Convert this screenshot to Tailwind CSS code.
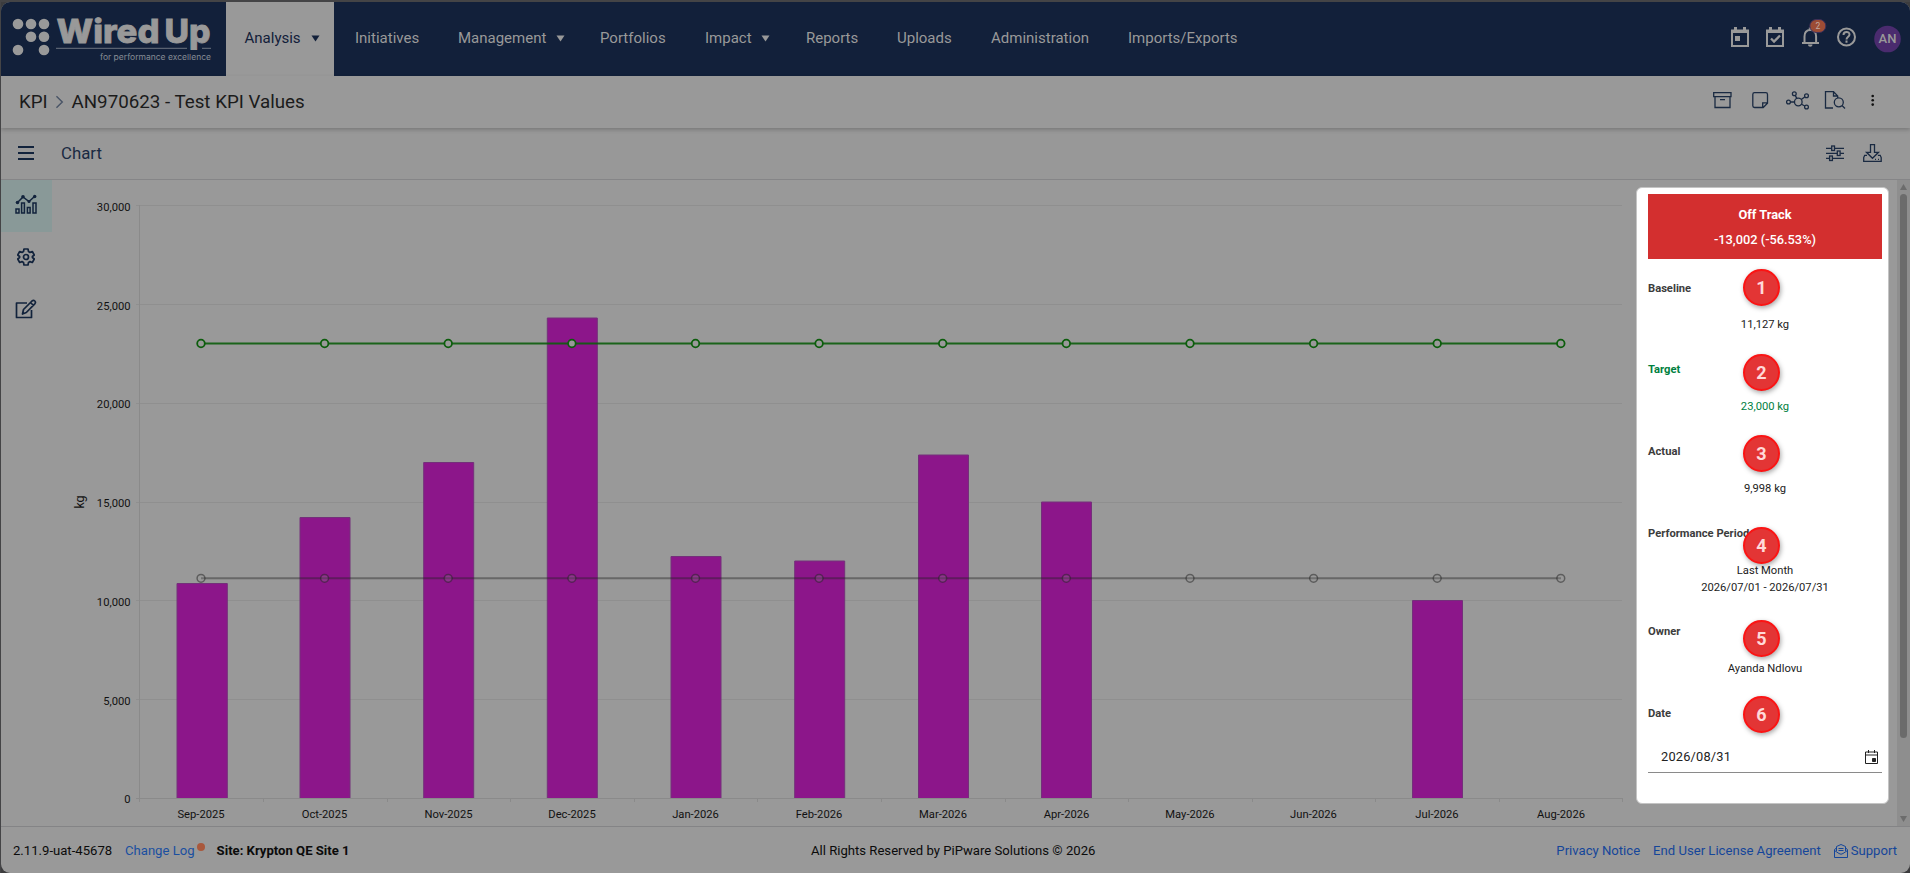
<!DOCTYPE html>
<html lang="en">
<head>
<meta charset="utf-8">
<title>WiredUp - Test KPI Values</title>
<script src="https://cdn.jsdelivr.net/npm/@tailwindcss/browser@4"></script>
</head>
<body class="h-screen w-screen overflow-hidden bg-[#3c3c3e] font-['Roboto',sans-serif]">
<div class="h-[873px] w-[1910px] border-t-2 border-l-[1px] border-[#444446]">
<div class="relative flex h-[871px] w-[1909px] flex-col overflow-hidden rounded-[9px] bg-[#999] text-[#111]">

  <header class="flex h-[74px] shrink-0 bg-[#12203a] text-[15px] text-[#999]">
    <div class="w-[225px] shrink-0">
      <svg width="225" height="74" viewBox="1 2 225 74" fill="#999">
        <circle cx="18" cy="24" r="5.3"/><circle cx="31" cy="24" r="5.3"/><circle cx="44" cy="24" r="5.3"/>
        <circle cx="31" cy="36.7" r="5.3"/><circle cx="44" cy="36.7" r="5.3"/>
        <circle cx="18" cy="50" r="5.3"/><circle cx="44" cy="50" r="5.3"/>
        <text x="56.500" y="42.800" font-family="Inter,sans-serif" font-weight="800" font-size="33" textLength="103" lengthAdjust="spacingAndGlyphs" stroke="#999" stroke-width=".8">Wired</text>
        <text x="164.500" y="42.800" font-family="Inter,sans-serif" font-weight="800" font-size="33" textLength="46" lengthAdjust="spacingAndGlyphs" stroke="#999" stroke-width=".8">Up</text>
        <path d="M56 48.3H187M202 48.3h9" stroke="#6c7480" stroke-width="1"/>
        <text x="100" y="60" font-family="Inter,sans-serif" font-size="8" textLength="111" lengthAdjust="spacingAndGlyphs" fill="#868c95">for performance excellence</text>
      </svg>
    </div>
    <nav class="flex h-full">
      <div class="flex w-[108px] items-center bg-[#999] pb-[2px] pl-[18.500px] text-[#12203a]">Analysis<svg class="mt-[1px] ml-[10px]" width="9" height="7" viewBox="0 0 9 7"><path d="M.5.5h8l-4 6z" fill="currentColor"/></svg></div>
      <div class="flex w-[124px] items-center pb-[2px] pl-[21px]">Initiatives</div>
      <div class="flex w-[142px] items-center pb-[2px]">Management<svg class="mt-[1px] ml-[10px]" width="9" height="7" viewBox="0 0 9 7"><path d="M.5.5h8l-4 6z" fill="currentColor"/></svg></div>
      <div class="flex w-[105px] items-center pb-[2px]">Portfolios</div>
      <div class="flex w-[101px] items-center pb-[2px]">Impact<svg class="mt-[1px] ml-[9px]" width="9" height="7" viewBox="0 0 9 7"><path d="M.5.5h8l-4 6z" fill="currentColor"/></svg></div>
      <div class="flex w-[91px] items-center pb-[2px]">Reports</div>
      <div class="flex w-[94px] items-center pb-[2px]">Uploads</div>
      <div class="flex w-[137px] items-center pb-[2px]">Administration</div>
      <div class="flex items-center pb-[2px]">Imports/Exports</div>
    </nav>
    <div class="ml-auto">
      <svg width="190" height="74" viewBox="1720 2 190 74" fill="none" stroke="#999" stroke-width="2">
        <path d="M1732 30.5h16V46h-16z"/><path d="M1731 31.5h18M1735.5 27v4M1744.500 27v4" stroke-width="3"/><path d="M1735 36h5v5h-5z" fill="#999" stroke="none"/>
        <path d="M1767 30.500h16V46h-16z"/><path d="M1766 31.500h18M1770.500 27v4M1779.500 27v4" stroke-width="3"/><path d="M1771 38.500l3 3 6-6" stroke-width="2.300"/>
        <path d="M1802 43h17M1804.500 43v-6.500c0-4 2-6.500 5.800-6.500s5.800 2.500 5.800 6.500V43"/><path d="M1808 44.500h4.500c0 3-4.500 3-4.500 0zM1808.800 27.500h3v3h-3z" fill="#999" stroke="none"/>
        <rect x="1809.800" y="19.500" width="16" height="13" rx="6.500" fill="#9c4c35" stroke="#3c2f59" stroke-width="1"/>
        <text x="1818" y="29" text-anchor="middle" font-family="Roboto,sans-serif" font-size="8.500" fill="#c3aaa2" stroke="none">2</text>
        <circle cx="1846.500" cy="37" r="8.500"/>
        <path d="M1843.500 35c0-4 6-4 6-.5 0 2.200-3 2.200-3 5"/><path d="M1846.500 40.500v2.200"/>
        <circle cx="1887.500" cy="39" r="13.300" fill="#4a2b6e" stroke="none"/>
        <text x="1887.500" y="43.300" text-anchor="middle" font-family="Roboto,sans-serif" font-size="13" font-weight="500" fill="#999" stroke="none">AN</text>
      </svg>
    </div>
  </header>

  <div class="z-10 flex h-[52px] shrink-0 items-center pl-[18px] shadow-[0_2px_4px_rgba(0,0,0,0.2)]">
    <h1 class="flex items-center text-[18.750px] leading-none text-[#1b1b1b]"><span class="w-[36px]">KPI</span><svg width="16.500" height="16" viewBox="0 0 17 16" fill="none" stroke="#4a5567" stroke-width="1.500"><path d="M1.500 2l6 6-6 6"/></svg><span>AN970623 - Test KPI Values</span></h1>
    <div class="ml-auto">
      <svg width="200" height="52" viewBox="1710 76 200 52" fill="none" stroke="#1a2a42" stroke-width="1.300">
        <path d="M1713.700 92.700h17.300v4h-17.300zM1715 96.700v10.800h15V96.700M1720 99.700h5"/>
        <path d="M1754.500 92.700h11.300q1.700 0 1.700 1.700v8.800l-4.300 4.300h-8.700q-1.700 0-1.700-1.700V94.400q0-1.700 1.700-1.700zM1762.700 107.300v-4.500h4.500"/>
        <circle cx="1798.300" cy="102" r="3.800"/><circle cx="1788.500" cy="102" r="1.900"/><circle cx="1794.300" cy="93.700" r="1.900"/><circle cx="1806.500" cy="95.700" r="1.900"/><circle cx="1806.500" cy="107" r="1.900"/><path d="M1790.500 102h4M1795.200 95.400l1.600 3M1801.300 99.600l3.400-2.700M1801.500 104.200l3.400 1.800"/>
        <path d="M1833 108h-7.500V91.700h8l4.200 4.200v2M1833.500 91.700v4.300h4.200"/><circle cx="1838.800" cy="102.300" r="4.500"/><path d="M1842 105.500l3 3"/>
        <g fill="#111" stroke="none"><circle cx="1872.700" cy="96" r="1.300"/><circle cx="1872.700" cy="100.300" r="1.300"/><circle cx="1872.700" cy="104.600" r="1.300"/></g>
      </svg>
    </div>
  </div>

  <div class="flex h-[52px] shrink-0 items-center border-b border-[#858587] bg-[#989898]">
    <div class="w-[60px] shrink-0 pl-[17px] pb-[1px]"><svg width="16" height="14" viewBox="0 0 16 14" stroke="#12233c" stroke-width="2"><path d="M0 1h16M0 7h16M0 13h16"/></svg></div>
    <h2 class="text-[16.800px] leading-none text-[#1a2a42]">Chart</h2>
    <div class="ml-auto">
      <svg width="100" height="50" viewBox="1810 128 100 50" fill="none" stroke="#1a2a42" stroke-width="1.300">
        <path d="M1826 147.300h5.500M1834.500 147.300h9.500M1826 152.300h11.200M1840.200 152.300h3.800M1826 157.300h3.500M1832.500 157.300h11.500"/><rect x="1831.700" y="145" width="2.800" height="4.500"/><rect x="1837.300" y="150" width="2.800" height="4.500"/><rect x="1829.600" y="155" width="2.800" height="4.500"/>
        <path d="M1870.500 143.700h4v7.600h4l-6 6-6-6h4zM1867 154.300h-2.300l-1 2.300v3.700h17.500v-3.700l-1-2.300h-2.300"/><path d="M1875 158.300h1M1878 158.300h1"/>
      </svg>
    </div>
  </div>

  <main class="flex h-[647px] shrink-0 border-b border-[#848486]">
    <aside class="w-[51px] shrink-0">
      <div class="flex h-[52px] items-center justify-center bg-[#899998] pr-[1px] pb-[3px]">
        <svg width="24" height="24" viewBox="14 193 24 24" fill="none" stroke="#12233c" stroke-width="1.500"><path d="M16 209h3v4h-3zM21.600 203h2.800v10h-2.800zM27.400 207.500h2.700v5.500h-2.700zM33 203h3v10h-3zM17.500 202.500l5.500-5.500 6 4.500 5.500-5"/><g fill="#12233c" stroke="none"><circle cx="17.500" cy="202.500" r="1.800"/><circle cx="23" cy="196.800" r="1.800"/><circle cx="29" cy="201.500" r="1.500"/><circle cx="34.700" cy="196.500" r="1.700"/></g></svg>
      </div>
      <div class="flex h-[52px] items-center justify-center pr-[1px] pb-[3px]">
        <svg width="18" height="18" viewBox="0 0 18 18" fill="none" stroke="#12233c" stroke-width="1.700" stroke-linejoin="round"><path d="M7 1h4l.5 2.500 1.500.9 2.300-.9 2 3.500-1.900 1.500v1l1.900 1.500-2 3.500-2.300-.9-1.500.9L11 17H7l-.5-2.500-1.500-.9-2.300.9-2-3.500 1.900-1.500v-1L.7 7l2-3.500 2.300.9 1.500-.9z"/><circle cx="9" cy="9" r="2.500"/></svg>
      </div>
      <div class="flex h-[52px] items-center justify-center pr-[1px] pb-[3px]">
        <svg width="22" height="20" viewBox="15 298 22 20" fill="none" stroke="#12233c" stroke-width="1.700" stroke-linejoin="round"><path d="M27 302H16.500v14.500h15V309M22.500 313l1-4.500 8.500-8.500q1.500-1.200 2.800 0t0 2.800l-8.500 8.700zM30.500 301.500l3 3"/></svg>
      </div>
    </aside>

    <section class="w-[1584px] shrink-0">
      <svg width="1584" height="645" viewBox="52 180 1584 645" font-family="Roboto,sans-serif" font-size="11.200" fill="#111">
        <path stroke="#8f8f8f" stroke-width="1" d="M136 205.500H1622M136 304.500H1622M136 403.500H1622M136 502.500H1622M136 600.500H1622M136 699.500H1622"/>
        <path stroke="#8a8a8a" stroke-width="1" fill="none" d="M136 798.500H1622.500M139.500 205V802M263.500 798v4M387.500 798v4M510.500 798v4M634.500 798v4M757.500 798v4M881.500 798v4M1005.500 798v4M1128.500 798v4M1252.500 798v4M1375.500 798v4M1499.500 798v4M1622.500 798v4"/>
        <g text-anchor="end"><text x="130.500" y="210.500">30,000</text><text x="130.500" y="309.500">25,000</text><text x="130.500" y="407.500">20,000</text><text x="130.500" y="506.500">15,000</text><text x="130.500" y="605.500">10,000</text><text x="130.500" y="704.500">5,000</text><text x="130.500" y="802.500">0</text></g>
        <text transform="translate(84 502) rotate(-90)" text-anchor="middle" font-size="12.500">kg</text>
        <g fill="#8c168a" stroke="#74307a" stroke-width="1">
          <path d="M177 798V583.500h50.300V798"/><path d="M300 798V517.500h50V798"/><path d="M423.700 798V462.500h50V798"/><path d="M547.300 798V318h50v480"/><path d="M671 798V556.500h50V798"/><path d="M794.700 798V561h50v237"/><path d="M918.500 798V455h50v343"/><path d="M1041.500 798V502h50v296"/><path d="M1412.500 798V600.500h50V798"/>
        </g>
        <path d="M201 578.300H1561" stroke="#222" stroke-opacity=".42" stroke-width="2"/>
        <g stroke="#222" stroke-opacity=".5" stroke-width="1.500" fill="#999" fill-opacity=".22"><circle cx="201" cy="578.300" r="3.900"/><circle cx="324.600" cy="578.300" r="3.900"/><circle cx="448.200" cy="578.300" r="3.900"/><circle cx="571.900" cy="578.300" r="3.900"/><circle cx="695.500" cy="578.300" r="3.900"/><circle cx="819.100" cy="578.300" r="3.900"/><circle cx="942.700" cy="578.300" r="3.900"/><circle cx="1066.300" cy="578.300" r="3.900"/><circle cx="1190" cy="578.300" r="3.900"/><circle cx="1313.600" cy="578.300" r="3.900"/><circle cx="1437.200" cy="578.300" r="3.900"/><circle cx="1560.800" cy="578.300" r="3.900"/></g>
        <path d="M201 343.500H1561" stroke="#0c5d0c" stroke-opacity=".9" stroke-width="2"/>
        <g stroke="#0c5d0c" stroke-width="1.800" fill="#999"><circle cx="201" cy="343.500" r="3.800"/><circle cx="324.600" cy="343.500" r="3.800"/><circle cx="448.200" cy="343.500" r="3.800"/><circle cx="571.900" cy="343.500" r="3.800"/><circle cx="695.500" cy="343.500" r="3.800"/><circle cx="819.100" cy="343.500" r="3.800"/><circle cx="942.700" cy="343.500" r="3.800"/><circle cx="1066.300" cy="343.500" r="3.800"/><circle cx="1190" cy="343.500" r="3.800"/><circle cx="1313.600" cy="343.500" r="3.800"/><circle cx="1437.200" cy="343.500" r="3.800"/><circle cx="1560.800" cy="343.500" r="3.800"/></g>
        <g text-anchor="middle"><text x="201" y="817.500">Sep-2025</text><text x="324.500" y="817.500">Oct-2025</text><text x="448.500" y="817.500">Nov-2025</text><text x="572" y="817.500">Dec-2025</text><text x="695.500" y="817.500">Jan-2026</text><text x="819" y="817.500">Feb-2026</text><text x="943" y="817.500">Mar-2026</text><text x="1066.500" y="817.500">Apr-2026</text><text x="1190" y="817.500">May-2026</text><text x="1313.500" y="817.500">Jun-2026</text><text x="1437" y="817.500">Jul-2026</text><text x="1561" y="817.500">Aug-2026</text></g>
      </svg>
    </section>

    <section class="relative mt-[7px] h-[617px] w-[253px] shrink-0 rounded-[6px] border border-[#c4c4c4] bg-white px-[6px] pt-[6px] pl-[11px] text-[11.200px] leading-[16px] text-[#222]">
      <div class="flex h-[65px] w-[234px] flex-col items-center bg-[#d32f2f] pt-[11px] text-[12.800px] text-white"><b class="h-[26px] leading-[20px]">Off Track</b><span class="leading-[18px] font-medium">-13,002 (-56.53%)</span></div>
      <div class="h-[82px] w-[234px] pt-[22px]"><div class="font-bold text-[#3c3c3c]">Baseline</div><div class="mt-[20px] text-center">11,127 kg</div></div>
      <div class="h-[82px] w-[234px] pt-[21px] text-[#00803e]"><div class="font-bold">Target</div><div class="mt-[21px] text-center">23,000 kg</div></div>
      <div class="h-[82px] w-[234px] pt-[21px]"><div class="font-bold text-[#3c3c3c]">Actual</div><div class="mt-[21px] text-center">9,998 kg</div></div>
      <div class="h-[98px] w-[234px] pt-[21px]"><div class="font-bold text-[#3c3c3c]">Performance Period</div><div class="mt-[20px] text-center leading-[17px]">Last Month<br>2026/07/01 - 2026/07/31</div></div>
      <div class="h-[82px] w-[234px] pt-[21px]"><div class="font-bold text-[#3c3c3c]">Owner</div><div class="mt-[21px] text-center">Ayanda Ndlovu</div></div>
      <div class="w-[234px] pt-[21px]"><div class="font-bold text-[#3c3c3c]">Date</div>
        <div class="mt-[20px] flex h-[31px] items-center border-b border-[#8a8a8a] pr-[4px] pl-[13px] text-[12.800px]"><span class="tracking-[0.2px]">2026/08/31</span><svg class="ml-auto" width="13" height="14" viewBox="0 0 13 14" fill="none" stroke="#222"><path d="M.5 2h12v11.500H.5zM.5 5h12M3.500 0v3M9.500 0v3"/><path d="M7.500 8.500h3v3h-3z" fill="#222"/></svg></div>
      </div>
      <div class="absolute top-[81px] left-[106px] flex size-[37px] items-center justify-center rounded-full border-2 border-[#fb1414] bg-[#e33535] text-[18px] font-bold text-[#ffd9d9] shadow-[1px_2px_5px_rgba(0,0,0,0.35)]">1</div>
      <div class="absolute top-[166px] left-[106px] flex size-[37px] items-center justify-center rounded-full border-2 border-[#fb1414] bg-[#e33535] text-[18px] font-bold text-[#ffd9d9] shadow-[1px_2px_5px_rgba(0,0,0,0.35)]">2</div>
      <div class="absolute top-[247px] left-[106px] flex size-[37px] items-center justify-center rounded-full border-2 border-[#fb1414] bg-[#e33535] text-[18px] font-bold text-[#ffd9d9] shadow-[1px_2px_5px_rgba(0,0,0,0.35)]">3</div>
      <div class="absolute top-[339px] left-[106px] flex size-[37px] items-center justify-center rounded-full border-2 border-[#fb1414] bg-[#e33535] text-[18px] font-bold text-[#ffd9d9] shadow-[1px_2px_5px_rgba(0,0,0,0.35)]">4</div>
      <div class="absolute top-[432px] left-[106px] flex size-[37px] items-center justify-center rounded-full border-2 border-[#fb1414] bg-[#e33535] text-[18px] font-bold text-[#ffd9d9] shadow-[1px_2px_5px_rgba(0,0,0,0.35)]">5</div>
      <div class="absolute top-[508px] left-[106px] flex size-[37px] items-center justify-center rounded-full border-2 border-[#fb1414] bg-[#e33535] text-[18px] font-bold text-[#ffd9d9] shadow-[1px_2px_5px_rgba(0,0,0,0.35)]">6</div>
    </section>

    <div class="ml-auto flex h-full w-[13px] flex-col items-center bg-[#8e8e8e] pr-[1px]">
      <svg class="mt-[4px] shrink-0" width="7" height="6"><path d="M3.500 0L7 6H0z" fill="#6c6c6c"/></svg>
      <div class="mt-[4px] h-[544px] w-[7px] shrink-0 rounded-full bg-[#6b6b6b]"></div>
      <svg class="mt-auto mb-[4px] shrink-0" width="7" height="6"><path d="M3.500 6L7 0H0z" fill="#6c6c6c"/></svg>
    </div>
  </main>

  <footer class="relative flex h-[46px] items-center pt-[2px] pr-[13px] pl-[12px] text-[13.120px] text-[#0b0b0b]">
    <span class="w-[112px]">2.11.9-uat-45678</span><span class="text-[#1a4fa0]">Change Log</span><span class="mb-[9px] ml-[2px] size-[8px] rounded-full bg-[#a9583c]"></span><b class="ml-[12px]">Site: Krypton QE Site 1</b>
    <span class="absolute left-[810px]">All Rights Reserved by PiPware Solutions © 2026</span>
    <div class="ml-auto flex items-center text-[#15469a]"><span class="mr-[13px]">Privacy Notice</span><span class="mr-[13px]">End User License Agreement</span>
      <svg class="mr-[3px]" width="14" height="14" viewBox="0 0 14 14" fill="none" stroke="currentColor"><path d="M2.500 4L.5 5.500v8h13v-8l-2-1.500M2.500 7V2.500L7 .5l4.500 2V7M.5 6.500L5 9.500q2 1.500 4 0l4.500-3M4.500 4.500h5M4.500 6.500h5"/></svg><span>Support</span></div>
  </footer>
</div>
</div>
</body>
</html>
